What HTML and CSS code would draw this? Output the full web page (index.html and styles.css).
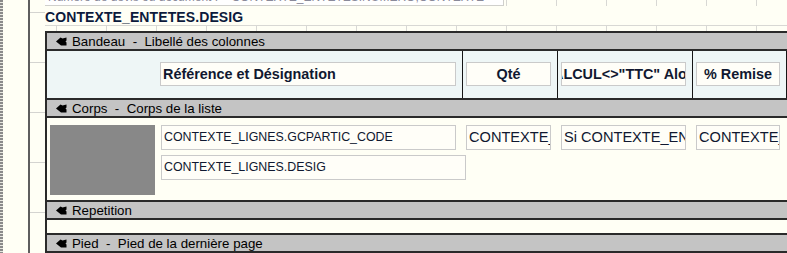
FILE: index.html
```html
<!DOCTYPE html>
<html lang="fr">
<head>
    <meta charset="UTF-8">
    <title>Etat - Liste des lignes</title>
    <link rel="stylesheet" href="styles.css">
</head>
<body>
    <div class="screen">
        <div class="ruler"></div>
        <div class="margin"></div>
        <div class="gutter"></div>

        <div class="page">
            <div class="prev-row">
                <div class="prev-field">
                    <div class="prev-text">Numéro de devis ou document :&nbsp;&nbsp;&nbsp; CONTEXTE_ENTETES.NUMERO,CONTEXTE</div>
                </div>
            </div>
            <div class="title-row">
                <span class="title">CONTEXTE_ENTETES.DESIG</span>
            </div>
            <div class="tick-row"></div>

            <div class="report">
                <!-- Bandeau -->
                <div class="band-head">
                    <svg class="hand" viewBox="0 0 11 9" width="11" height="9"><path d="M0 4.5 L4.5 0.5 L6.5 1.5 L10.5 0.5 L10.5 3.5 L9.5 4.5 L10.5 5.5 L10.5 8.5 L5 8.5 Z"/></svg>
                    Bandeau &nbsp;-&nbsp; Libellé des colonnes
                </div>
                <div class="band header-band">
                    <div class="cell first"><div class="field bold">Référence et Désignation</div></div>
                    <div class="cell"><div class="field bold centered">Qté</div></div>
                    <div class="cell"><div class="field bold clip"><span>Si CALCUL&lt;&gt;"TTC" Alors</span></div></div>
                    <div class="cell"><div class="field bold centered">% Remise</div></div>
                </div>

                <!-- Corps -->
                <div class="band-head">
                    <svg class="hand" viewBox="0 0 11 9" width="11" height="9"><path d="M0 4.5 L4.5 0.5 L6.5 1.5 L10.5 0.5 L10.5 3.5 L9.5 4.5 L10.5 5.5 L10.5 8.5 L5 8.5 Z"/></svg>
                    Corps &nbsp;-&nbsp; Corps de la liste
                </div>
                <div class="band body-band">
                    <div class="picture"></div>
                    <div class="field">CONTEXTE_LIGNES.GCPARTIC_CODE</div>
                    <div class="field large">CONTEXTE_LIGNES.QTE</div>
                    <div class="field large">Si CONTEXTE_ENTETES.CALCUL</div>
                    <div class="field large">CONTEXTE_LIGNES.REMISE</div>
                    <div class="field wide">CONTEXTE_LIGNES.DESIG</div>
                </div>

                <!-- Repetition -->
                <div class="band-head">
                    <svg class="hand" viewBox="0 0 11 9" width="11" height="9"><path d="M0 4.5 L4.5 0.5 L6.5 1.5 L10.5 0.5 L10.5 3.5 L9.5 4.5 L10.5 5.5 L10.5 8.5 L5 8.5 Z"/></svg>
                    Repetition
                </div>
                <div class="band repeat-band"></div>

                <!-- Pied -->
                <div class="band-head">
                    <svg class="hand" viewBox="0 0 11 9" width="11" height="9"><path d="M0 4.5 L4.5 0.5 L6.5 1.5 L10.5 0.5 L10.5 3.5 L9.5 4.5 L10.5 5.5 L10.5 8.5 L5 8.5 Z"/></svg>
                    Pied &nbsp;-&nbsp; Pied de la dernière page
                </div>
                <div class="band foot-band"></div>
            </div>
        </div>
    </div>
</body>
</html>
```

FILE: styles.css
```css
* {
    box-sizing: border-box;
}

html,
body {
    margin: 0;
    height: 100%;
    overflow: hidden;
    background-color: #FFFFF5;
    font-family: 'Liberation Sans', Arial, sans-serif;
}

.screen {
    display: flex;
    height: 253px;
    overflow: hidden;
}

.ruler {
    width: 3px;
    flex: none;
    background: repeating-linear-gradient(to bottom, #8a8a8a 0 2px, #e8e8e0 2px 3px);
}

.margin {
    width: 27px;
    flex: none;
    border-right: 2px solid #5e5e5e;
}

.gutter {
    width: 15px;
    flex: none;
    background: repeating-linear-gradient(to bottom, transparent 0 12px, #d4d4d0 12px 13px, transparent 13px 50px);
}

.page {
    width: 900px;
    flex: none;
}

/* grid rows above the report */
.prev-row {
    height: 6px;
    background: repeating-linear-gradient(to right, transparent 0 11px, #d8d8d4 11px 12px, transparent 12px 50px);
    overflow: hidden;
}

.prev-field {
    width: 460px;
    height: 6px;
    margin-left: -1px;
    background-color: #FFFFFF;
    border-bottom: 1px solid #d0d0cc;
    border-right: 1px solid #d0d0cc;
    overflow: hidden;
}

.prev-text {
    margin-top: -9px;
    padding-left: 4px;
    font-size: 12px;
    line-height: 12px;
    color: #8a8a9a;
    white-space: nowrap;
}

.title-row {
    height: 19px;
    padding-top: 2px;
    line-height: 17px;
}

.title {
    font-size: 14px;
    font-weight: bold;
    color: #0c1a3c;
    letter-spacing: 0.1px;
}

.tick-row {
    height: 6px;
    border-top: 1px solid #d8d8d4;
    background: repeating-linear-gradient(to right, transparent 0 11px, #d8d8d4 11px 12px, transparent 12px 50px);
}

/* report bands */
.report {
    border-left: 2px solid #2a2a2a;
    width: 760px;
}

.band-head {
    height: 20px;
    border-top: 2px solid #2a2a2a;
    border-bottom: 2px solid #2a2a2a;
    background-color: #c4c4c4;
    font-size: 13.3px;
    line-height: 15px;
    color: #000;
    padding-left: 9px;
    white-space: nowrap;
    display: flex;
    align-items: center;
    gap: 5px;
}

.hand {
    fill: #000;
    flex: none;
}

.field {
    height: 25px;
    background-color: #FFFEF8;
    border: 1px solid #cacaca;
    font-size: 12.4px;
    line-height: 23px;
    padding: 0 2px;
    color: #101830;
    white-space: nowrap;
    overflow: hidden;
}

.field.bold {
    height: 24px;
    font-size: 14.4px;
    font-weight: bold;
    line-height: 22px;
}

.field.centered {
    display: flex;
    justify-content: center;
}

.field.clip span {
    margin-left: -39px;
}

.field.large {
    font-size: 14.6px;
}

.header-band {
    height: 47px;
    background-color: #EEF6F6;
    display: grid;
    grid-template-columns: 416px 95px 135px 94px;
}

.cell {
    border-right: 1px solid #151515;
    padding: 11px 6px 0 3px;
}

.cell.first {
    padding-left: 113px;
}

.body-band {
    height: 82px;
    background-color: #FFFFF5;
    display: grid;
    grid-template-columns: 104px 295px 85px 125px 84px;
    grid-template-rows: 25px 25px;
    column-gap: 10px;
    row-gap: 5px;
    padding-top: 7px;
}

.picture {
    grid-row: 1 / span 2;
    width: 105px;
    height: 70px;
    margin-left: 3px;
    background-color: #888888;
}

.field.wide {
    grid-column: 2 / span 2;
    width: 305px;
}

.repeat-band {
    height: 13px;
}

.foot-band {
    height: 20px;
}
```
